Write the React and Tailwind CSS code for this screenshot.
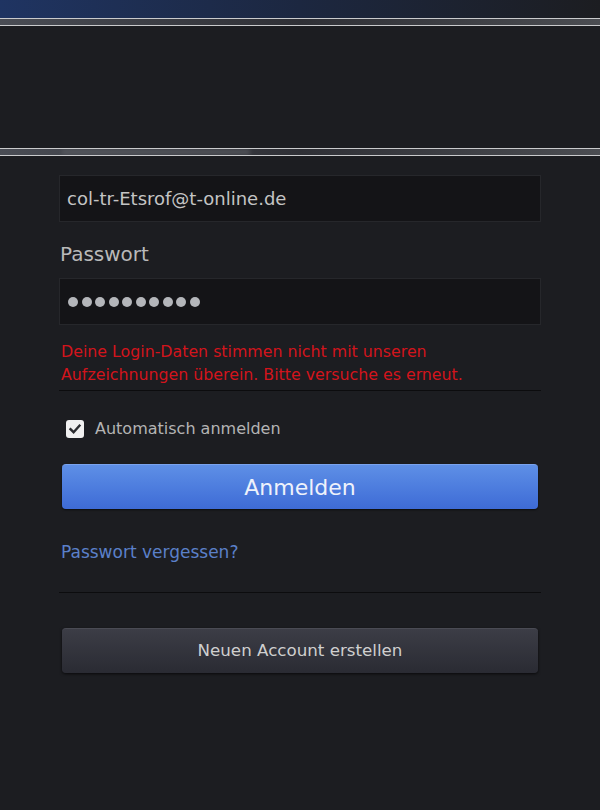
import React from 'react';

function Band({ children }) {
  return (
    <div className="h-[8px] border-y border-[#c9cacc] bg-gradient-to-r from-[#4a4d55] via-[#2f3036] to-[#4b4d52] relative overflow-hidden">
      {children}
    </div>
  );
}

export default function App() {
  return (
    <div className="w-[600px] h-[810px] bg-[#1c1d21] overflow-hidden" style={{ fontFamily: '"DejaVu Sans", "Open Sans", sans-serif' }}>
      <div className="h-[18px] bg-gradient-to-r from-[#1f3462] via-[#1c2740] to-[#1c1d21]" />
      <Band />
      <div className="h-[122px]" />
      <Band>
        <div className="absolute left-[62px] top-0 h-full w-[188px] bg-[#5a5c62] blur-[2px] opacity-70" />
      </Band>

      <div className="px-[59px] pt-[19px]">
        <div className="h-[47px] bg-[#141417] border border-[#26272b] flex items-center pl-[7px] text-[18px] text-[#c4c4c4]">
          col-tr-Etsrof@t-online.de
        </div>

        <div className="pt-[20px] pb-[11px] pl-[1px] text-[20px] text-[#b9b9b9] leading-[25px]">Passwort</div>

        <div className="h-[47px] bg-[#141417] border border-[#26272b] flex items-center pl-[8px] gap-[3.5px]">
          {Array.from({ length: 10 }).map((_, i) => (
            <span key={i} className="w-[10px] h-[10px] rounded-full bg-[#b4b6ba]" />
          ))}
        </div>

        <div className="pt-[15px] pl-[2px] text-[15.8px] leading-[23px] text-[#d3141c]">
          Deine Login-Daten stimmen nicht mit unseren<br />
          Aufzeichnungen überein. Bitte versuche es erneut.
        </div>
        <div className="mt-[4px] h-px bg-[#0c0c0e]" />

        <div className="flex items-center gap-[11px] pl-[7px] mt-[26px]">
          <div className="w-[18px] h-[18px] rounded-[3px] bg-[#f0f0f0] flex items-center justify-center">
            <svg width="14" height="14" viewBox="0 0 14 14" fill="none">
              <path d="M2.5 7.2 L5.6 10.2 L11.5 3.6" stroke="#2b2c30" strokeWidth="2.4" strokeLinecap="square" />
            </svg>
          </div>
          <span className="text-[16px] text-[#b4b4b4]">Automatisch anmelden</span>
        </div>

        <button className="mt-[23px] mx-[3px] w-[476px] h-[45px] rounded-[4px] bg-gradient-to-b from-[#5e8fe6] to-[#3e6bd6] border-t border-[#7aa3ee] shadow-[0_1px_2px_rgba(0,0,0,0.6)] text-[22px] text-[#eef2fb] flex items-center justify-center">
          Anmelden
        </button>

        <div className="mt-[31px] pl-[2px] text-[17px] text-[#5b80c9]">Passwort vergessen?</div>

        <div className="mt-[26px] h-px bg-[#0c0c0e]" />

        <button className="mt-[35px] mx-[3px] w-[476px] h-[45px] rounded-[4px] bg-gradient-to-b from-[#3c3d46] to-[#2a2b33] border-t border-[#4a4b54] shadow-[0_1px_3px_rgba(0,0,0,0.7)] text-[16.7px] text-[#cfcfcf] flex items-center justify-center">
          Neuen Account erstellen
        </button>
      </div>
    </div>
  );
}
